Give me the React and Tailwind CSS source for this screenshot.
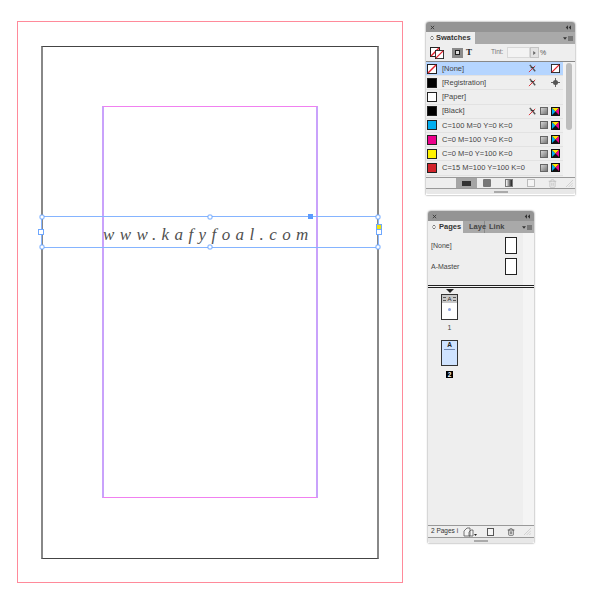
// App.jsx
// InDesign document page with the Swatches and Pages panels floating beside it.
import { ChevronsUpDown, Trash2 } from 'lucide-react'

const swatches = [
  { name: '[None]', color: 'none', selected: true, cross: true, end: 'none' },
  { name: '[Registration]', color: '#000000', cross: true, end: 'reg' },
  { name: '[Paper]', color: '#ffffff' },
  { name: '[Black]', color: '#000000', cross: true, process: true, end: 'cmyk' },
  { name: 'C=100 M=0 Y=0 K=0', color: '#00aeef', process: true, end: 'cmyk' },
  { name: 'C=0 M=100 Y=0 K=0', color: '#ec008c', process: true, end: 'cmyk' },
  { name: 'C=0 M=0 Y=100 K=0', color: '#fff200', process: true, end: 'cmyk' },
  { name: 'C=15 M=100 Y=100 K=0', color: '#d2232a', process: true, end: 'cmyk' },
]

// red slash used by the [None] chips
function NoneChip({ className }) {
  return (
    <svg viewBox="0 0 10 10" className={className}>
      <rect x="0.5" y="0.5" width="9" height="9" fill="#fff" stroke="#222" />
      <path d="M1 9 L9 1" stroke="#e0202a" strokeWidth="1.4" />
    </svg>
  )
}

function CrossPencil() {
  return (
    <svg viewBox="0 0 10 10" className="w-[9px] h-[9px]">
      <path d="M2 1 L8 8" stroke="#555" strokeWidth="1.6" />
      <path d="M1 9 L8 2" stroke="#d8232a" strokeWidth="1" />
      <path d="M3 4 H7" stroke="#333" strokeWidth="1" />
    </svg>
  )
}

function ProcessChip() {
  return <div className="w-2 h-2 bg-gradient-to-br from-[#d6d6d6] to-[#777] border border-[#666]" />
}

function CmykChip() {
  return (
    <svg viewBox="0 0 9 9" className="w-[9px] h-[9px]">
      <rect width="9" height="9" fill="#111" />
      <path d="M1 1 L4.5 4.5 L1 8 Z" fill="#00aeef" />
      <path d="M1 1 H8 L4.5 4.5 Z" fill="#ffe600" />
      <path d="M8 1 V8 L4.5 4.5 Z" fill="#ec008c" />
    </svg>
  )
}

function RegMark() {
  return (
    <svg viewBox="0 0 10 10" className="w-[9px] h-[9px]">
      <circle cx="5" cy="5" r="2.8" fill="#555" />
      <path d="M5 0 V10 M0 5 H10" stroke="#555" strokeWidth="1" />
    </svg>
  )
}

function SwatchRow({ s }) {
  return (
    <div className={`h-[14.2px] flex-none flex items-center border-b border-[#e2e2e2] ${s.selected ? 'bg-[#b5d5ff]' : 'bg-[#eeeeee]'}`}>
      <div className="w-[11px] ml-[1px] flex-none">
        {s.color === 'none'
          ? <NoneChip className="w-[10px] h-[10px]" />
          : <div className="w-[10px] h-[10px] border border-[#222]" style={{ backgroundColor: s.color }} />}
      </div>
      <span className="ml-[4px] flex-1 text-[7.5px] leading-none text-[#444] whitespace-nowrap">{s.name}</span>
      <div className="w-[9px] flex-none flex justify-center">{s.cross && <CrossPencil />}</div>
      <div className="w-[10px] ml-[2px] flex-none flex justify-center">{s.process && <ProcessChip />}</div>
      <div className="w-[9px] ml-[2px] mr-[3px] flex-none flex justify-center">
        {s.end === 'none' && <NoneChip className="w-[9px] h-[9px]" />}
        {s.end === 'reg' && <RegMark />}
        {s.end === 'cmyk' && <CmykChip />}
      </div>
    </div>
  )
}

function TitleBar() {
  return (
    <div className="h-[10px] flex-none flex items-center justify-between px-[4px] bg-[#949494] rounded-t-[3px]">
      <svg viewBox="0 0 6 6" className="w-[5px] h-[5px]"><path d="M1 1 L5 5 M5 1 L1 5" stroke="#333" strokeWidth="1" /></svg>
      <svg viewBox="0 0 8 6" className="w-[6px] h-[5px]"><path d="M4 0 L1 3 L4 6 Z M8 0 L5 3 L8 6 Z" fill="#333" /></svg>
    </div>
  )
}

function PanelMenu() {
  return (
    <div className="ml-auto mr-[2px] flex items-center gap-[1px]">
      <svg viewBox="0 0 6 4" className="w-[4px] h-[3px]"><path d="M0 0 H6 L3 4 Z" fill="#333" /></svg>
      <div className="w-[5px] h-[5px] bg-[#777]" />
    </div>
  )
}

function GrayIcon({ className }) {
  return <div className={`w-2 h-2 flex-none ${className}`} />
}

// diagonal hatch in the panel's bottom-right corner
function ResizeCorner({ className }) {
  return (
    <svg viewBox="0 0 8 8" className={`w-[7px] h-[7px] flex-none ${className}`}>
      <path d="M0 8 L8 0 M3 8 L8 3 M6 8 L8 6" stroke="#c4c4c4" strokeWidth="0.8" />
    </svg>
  )
}

function Grip() {
  return (
    <div className="h-[6px] flex-none flex items-center justify-center bg-[#e8e8e8] rounded-b-[2px] border-t border-[#999]">
      <div className="w-[14px] h-[2px] bg-[#aaa]" />
    </div>
  )
}

function SwatchesPanel() {
  return (
    <div className="absolute left-[426px] top-[22px] w-[149px] h-[173px] flex flex-col shadow-[0_0_2px_#666] rounded-t-[3px] font-['Liberation_Sans',sans-serif]">
      <TitleBar />
      <div className="h-[12px] flex-none flex bg-[#a9a9a9]">
        <div className="w-[49px] bg-[#eeeeee] flex items-center pl-[3px] gap-[1px]">
          <ChevronsUpDown size={6} strokeWidth={2.5} className="text-[#333]" />
          <span className="text-[7.5px] font-bold leading-none text-[#333]">Swatches</span>
        </div>
        <PanelMenu />
      </div>
      <div className="h-[18px] flex-none flex items-center bg-[#eeeeee] border-b border-[#888] pl-[4px]">
        <div className="relative w-[15px] h-[12px] flex-none">
          <NoneChip className="absolute left-0 top-0 w-[10px] h-[10px]" />
          <NoneChip className="absolute left-[5px] top-[3px] w-[9px] h-[9px]" />
        </div>
        <div className="ml-[7px] w-[11px] h-[10px] flex-none bg-[#8a8a8a] flex items-center justify-center">
          <div className="w-[5px] h-[5px] border border-[#222] bg-[#ddd]" />
        </div>
        <span className="ml-[3px] w-[6px] text-[9px] font-bold leading-none font-['Liberation_Serif',serif] text-[#222]">T</span>
        <span className="ml-[19px] w-[16px] text-[6.5px] leading-none text-[#777]">Tint:</span>
        <div className="w-[23px] h-[11px] flex-none bg-[#f3f3f3] border border-[#d8d8d8]" />
        <div className="w-[9px] h-[11px] flex-none bg-[#e2e2e2] border border-[#c4c4c4] flex items-center justify-center">
          <svg viewBox="0 0 4 6" className="w-[3px] h-[4px]"><path d="M0 0 L4 3 L0 6 Z" fill="#666" /></svg>
        </div>
        <span className="ml-[1px] text-[7px] leading-none text-[#555]">%</span>
      </div>
      <div className="h-[115px] flex-none flex bg-[#eeeeee] overflow-hidden">
        <div className="w-[137px] flex-none flex flex-col">
          {swatches.map((s) => <SwatchRow key={s.name} s={s} />)}
        </div>
        <div className="flex-1 bg-[#f2f2f2] pt-[1px] flex justify-center">
          <div className="w-[6px] h-[67px] rounded-full bg-[#bdbdbd]" />
        </div>
      </div>
      <div className="h-[11px] flex-none flex items-center bg-[#eeeeee] border-t border-[#999]">
        <div className="ml-[30px] w-[21px] h-[10px] flex-none bg-[#a5a5a5] flex items-center justify-center">
          <div className="w-[9px] h-[5px] bg-[#333]" />
        </div>
        <GrayIcon className="ml-[6px] bg-[#777] rounded-[1px]" />
        <GrayIcon className="ml-[14px] bg-gradient-to-r from-white to-[#222] border border-[#777]" />
        <GrayIcon className="ml-[14px] bg-[#f4f4f4] border border-[#bbb]" />
        <Trash2 size={9} className="ml-[13px] flex-none text-[#bbb]" />
        <ResizeCorner className="ml-[9px]" />
      </div>
      <Grip />
    </div>
  )
}

function MasterRow({ label }) {
  return (
    <div className="h-[21px] flex items-center pl-[3px] pr-[6px]">
      <span className="text-[7px] leading-none text-[#444]">{label}</span>
      <div className="ml-auto w-[12px] h-[17px] bg-white border border-[#222]" />
    </div>
  )
}

function PagesPanel() {
  return (
    <div className="absolute left-[428px] top-[211px] w-[106px] h-[332px] flex flex-col shadow-[0_0_2px_#666] rounded-t-[3px] font-['Liberation_Sans',sans-serif]">
      <TitleBar />
      <div className="h-[12px] flex-none flex items-stretch bg-[#a9a9a9]">
        <div className="w-[35px] bg-[#eeeeee] flex items-center pl-[3px] gap-[2px]">
          <ChevronsUpDown size={6} strokeWidth={2.5} className="text-[#333]" />
          <span className="text-[7.5px] font-bold leading-none text-[#333]">Pages</span>
        </div>
        <div className="w-[22px] pl-[6px] border-r border-[#8a8a8a] flex items-center">
          <span className="text-[7.5px] font-bold leading-none text-[#444]">Laye</span>
        </div>
        <div className="w-[21px] pl-[4px] flex items-center">
          <span className="text-[7.5px] font-bold leading-none text-[#444]">Link</span>
        </div>
        <PanelMenu />
      </div>
      <div className="flex-1 flex flex-col bg-[#eeeeee]">
        <div className="h-[52px] flex-none flex flex-col pt-[2px] border-r-[11px] border-[#f4f4f4]">
          <MasterRow label="[None]" />
          <MasterRow label="A-Master" />
        </div>
        <div className="h-[3px] flex-none border-y border-[#222] bg-[#f6f6f6]" />
        <div className="flex-1 relative flex flex-col items-start pl-[13px] pt-[6px] border-r-[11px] border-[#f4f4f4]">
          <svg viewBox="0 0 8 4" className="absolute left-[18px] top-[1px] w-[8px] h-[4px]"><path d="M0 0 H8 L4 4 Z" fill="#222" /></svg>
          <div className="w-[17px] h-[26px] bg-white border border-[#333] flex flex-col items-center">
            <div className="w-full h-[8px] flex items-center justify-center gap-[1px] bg-[#c8c8c8]">
              <div className="w-[3px] h-[4px] border-y border-[#555]" />
              <span className="text-[6px] leading-[8px] text-[#222]">A</span>
              <div className="w-[3px] h-[4px] border-y border-[#555]" />
            </div>
            <div className="mt-[5px] w-[3px] h-[3px] rounded-full bg-[#8fa3dc]" />
          </div>
          <span className="w-[17px] mt-[4px] text-center text-[7px] leading-[8px] text-[#444]">1</span>
          <div className="mt-[8px] w-[17px] h-[26px] bg-[#cfe3ff] border border-[#333] flex flex-col items-center">
            <div className="w-full text-[6.5px] leading-[7px] text-center font-bold text-[#222]">A</div>
            <div className="mt-[1px] w-[11px] h-px bg-[#7187b0]" />
          </div>
          <div className="w-[17px] mt-[5px] flex justify-center">
            <span className="w-[7px] h-[7px] bg-black text-white text-[6.5px] leading-[7px] font-bold text-center">2</span>
          </div>
        </div>
      </div>
      <div className="h-[12px] flex-none flex items-center bg-[#eeeeee] border-t border-[#999] pl-[3px]">
        <span className="w-[32px] flex-none text-[6.5px] leading-none text-[#333] whitespace-nowrap">2 Pages i</span>
        <svg viewBox="0 0 14 10" className="w-[14px] h-[10px] flex-none">
          <path d="M1 9 V4 L4 1 H7 V9 Z M6 9 V5 L8 3 H10 V9 Z" fill="#f4f4f4" stroke="#555" strokeWidth="0.8" />
          <path d="M11 7 H14 L12.5 9 Z" fill="#222" />
        </svg>
        <div className="ml-[10px] w-[7px] h-[8px] flex-none bg-[#f4f4f4] border border-[#555]" />
        <Trash2 size={8} className="ml-[13px] flex-none text-[#444]" />
        <ResizeCorner className="ml-[9px]" />
      </div>
      <Grip />
    </div>
  )
}

// little blue selection handle, centred on its own point
function Handle({ className }) {
  return <div className={`absolute w-[5px] h-[5px] rounded-[1.5px] bg-white border border-[#6fa8ff] -translate-x-1/2 -translate-y-1/2 ${className}`} />
}

function DocumentCanvas() {
  return (
    <>
      <div className="absolute left-[17px] top-[21px] w-[386px] h-[562px] border border-[#ff8a9a]" />
      <div className="absolute left-[41px] top-[46px] w-[338px] h-[513px] border-y border-y-[#444] border-x-2 border-x-[#888]" />
      <div className="absolute left-[102px] top-[106px] w-[216px] h-[392px] border-y border-y-[#f080f0] border-x-2 border-x-[#c9a2fb]" />

      <div className="absolute left-[41px] top-[216px] w-[338px] h-[32px] border border-[#85b4ff]">
        <span className="absolute left-[61px] top-[8px] text-[17px] leading-[20px] tracking-[5.4px] italic whitespace-nowrap text-[#505050] font-['Liberation_Serif',serif]">
          www.kafyfoal.com
        </span>
        <Handle className="left-0 top-0" />
        <Handle className="left-[168px] top-0" />
        <Handle className="left-[336px] top-0" />
        <Handle className="left-0 top-[30px]" />
        <Handle className="left-[168px] top-[30px]" />
        <Handle className="left-[336px] top-[30px]" />
        <div className="absolute left-[266px] top-[-3px] w-[5px] h-[5px] bg-[#5b9bff]" />
        <div className="absolute left-[-4px] top-[12px] w-[6px] h-[6px] bg-white border border-[#6fa8ff]" />
        <div className="absolute left-[334px] top-[7px] w-[6px] h-[6px] bg-[#f5e60a] border border-[#6fa8ff]" />
        <div className="absolute left-[334px] top-[12px] w-[6px] h-[6px] bg-white border border-[#6fa8ff]" />
      </div>
    </>
  )
}

export default function App() {
  return (
    <div className="relative w-[600px] h-[609px] overflow-hidden bg-white">
      <DocumentCanvas />
      <SwatchesPanel />
      <PagesPanel />
    </div>
  )
}
